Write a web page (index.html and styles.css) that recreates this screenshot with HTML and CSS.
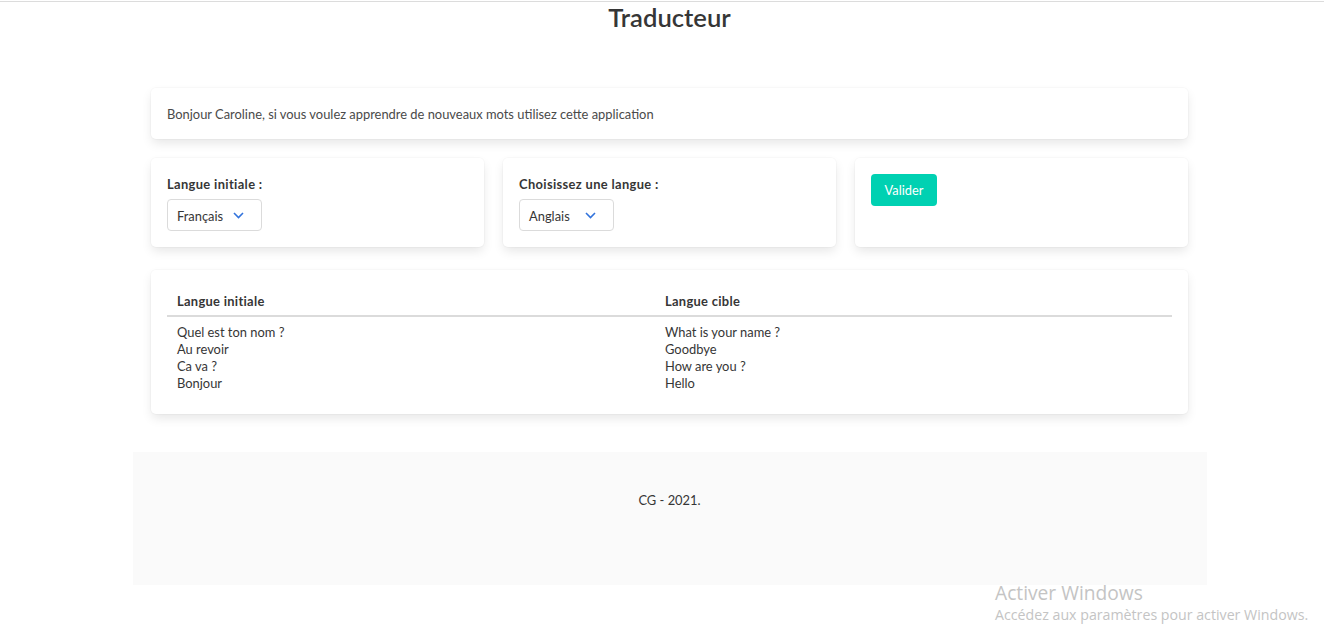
FILE: index.html
```html
<!DOCTYPE html>
<html lang="fr">
<head>
<meta charset="utf-8">
<title>Traducteur</title>
<link rel="stylesheet" href="styles.css">
</head>
<body>
<div class="topline"></div>
<div class="page">
  <h1 class="title">Traducteur</h1>
  <main class="container">
    <section class="box intro">Bonjour Caroline, si vous voulez apprendre de nouveaux mots utilisez cette application</section>
    <div class="columns">
      <div class="box card">
        <div class="label">Langue initiale :</div>
        <div class="select">
          <span>Français</span>
          <svg class="chev" width="11" height="7" viewBox="0 0 11 7"><path d="M1 1 L5.5 5.5 L10 1" fill="none" stroke="#3273dc" stroke-width="1.6"/></svg>
        </div>
      </div>
      <div class="box card">
        <div class="label">Choisissez une langue :</div>
        <div class="select">
          <span>Anglais</span>
          <svg class="chev" width="11" height="7" viewBox="0 0 11 7"><path d="M1 1 L5.5 5.5 L10 1" fill="none" stroke="#3273dc" stroke-width="1.6"/></svg>
        </div>
      </div>
      <div class="box card">
        <button class="button">Valider</button>
      </div>
    </div>
    <section class="box tablebox">
      <table class="table">
        <thead>
          <tr><th class="c1">Langue initiale</th><th>Langue cible</th></tr>
        </thead>
        <tbody>
          <tr>
            <td>Quel est ton nom ?<br>Au revoir<br>Ca va ?<br>Bonjour</td>
            <td>What is your name ?<br>Goodbye<br>How are you ?<br>Hello</td>
          </tr>
        </tbody>
      </table>
    </section>
  </main>
  <footer class="footer">CG - 2021.</footer>
</div>
<div class="watermark">
  <div class="wm1">Activer Windows</div>
  <div class="wm2">Accédez aux paramètres pour activer Windows.</div>
</div>
</body>
</html>
```
FILE: styles.css
```css
html, body {
  margin: 0;
  padding: 0;
  background: #fff;
}
body {
  font-family: Lato, "Liberation Sans", sans-serif;
  font-size: 12.9px;
  color: #4a4a4a;
  overflow: hidden;
  height: 644px;
  position: relative;
}
.topline {
  height: 1px;
  margin-top: 1px;
  background: #dcdcdc;
}
.page {
  padding-left: 15px;
}
.title {
  margin: 0;
  text-align: center;
  font-size: 25.6px;
  font-weight: 600;
  line-height: 30px;
  color: #363636;
}
.container {
  width: 1037px;
  margin: 56px auto 0;
}
.box {
  background: #fff;
  border-radius: 5px;
  box-shadow: 0 0.4em 0.8em -0.1em rgba(10,10,10,0.1), 0 0 0 1px rgba(10,10,10,0.02);
  box-sizing: border-box;
}
.intro {
  height: 51px;
  padding: 0 16px;
  display: flex;
  align-items: center;
}
.columns {
  display: grid;
  grid-template-columns: repeat(3, 1fr);
  gap: 19px;
  margin-top: 19px;
}
.card {
  height: 89px;
  padding: 17px 16px 16px;
}
.label {
  font-weight: 700;
  color: #363636;
  line-height: 19px;
  margin-bottom: 5px;
  letter-spacing: 0.35px;
}
.select {
  width: 95px;
  height: 32px;
  box-sizing: border-box;
  border: 1px solid #dbdbdb;
  border-radius: 4px;
  display: flex;
  align-items: center;
  justify-content: space-between;
  padding: 1px 17px 0 9px;
  color: #363636;
}
.chev {
  display: block;
}
.button {
  height: 32px;
  width: 66px;
  margin-top: -1px;
  border: none;
  border-radius: 4px;
  background: #00d1b2;
  color: #fff;
  font-family: inherit;
  font-size: 12.8px;
  padding: 0;
  cursor: pointer;
}
.tablebox {
  margin-top: 23px;
  padding: 16px;
}
.table {
  width: 100%;
  border-collapse: collapse;
  color: #363636;
}
.table th {
  text-align: left;
  font-weight: 700;
  padding: 6px 10px 4px;
  line-height: 19px;
  border-bottom: 2px solid #dbdbdb;
  letter-spacing: 0.3px;
}
.table th.c1 {
  width: 468px;
}
.table td {
  padding: 7px 10px 6px;
  line-height: 17px;
  vertical-align: top;
}
.footer {
  width: 1074px;
  margin: 38px auto 0;
  background: #fafafa;
  box-sizing: border-box;
  padding: 39px 0 75px;
  line-height: 19px;
  text-align: center;
  color: #363636;
}
.watermark {
  position: absolute;
  left: 995px;
  top: 580px;
  color: #c4c4c4;
  font-family: "Open Sans", sans-serif;
}
.wm1 {
  font-size: 19.2px;
  line-height: 25px;
}
.wm2 {
  font-size: 14.2px;
  line-height: 20px;
}
```
